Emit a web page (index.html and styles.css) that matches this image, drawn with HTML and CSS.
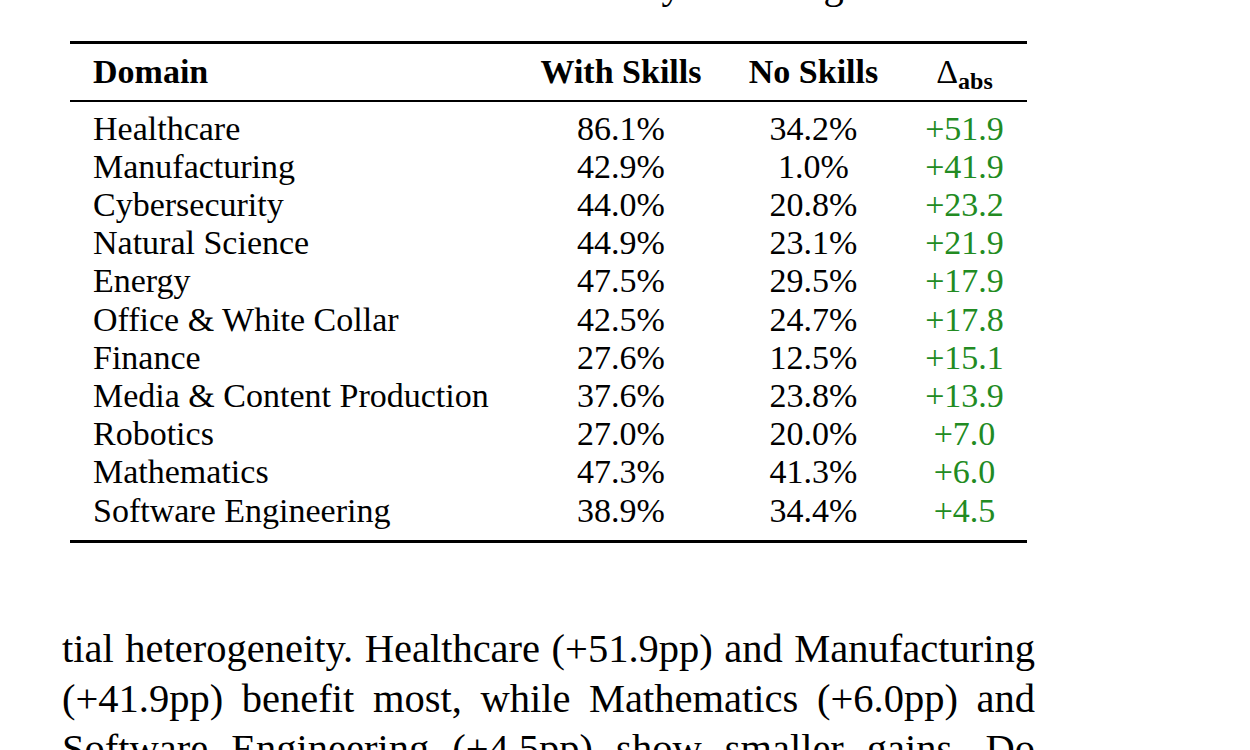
FILE: index.html
```html
<!DOCTYPE html>
<html lang="en">
<head>
<meta charset="utf-8">
<title>Domain results</title>
<link rel="stylesheet" href="styles.css">
</head>
<body>
<div class="page">
  <div class="caption"><span class="cap-label">Table 4:</span> Results sorted by domain gain.</div>
  <table class="results">
    <colgroup>
      <col class="c-domain">
      <col class="c-with">
      <col class="c-no">
      <col class="c-delta">
    </colgroup>
    <thead>
      <tr>
        <th class="left">Domain</th>
        <th>With Skills</th>
        <th>No Skills</th>
        <th><span class="delta">Δ</span><sub>abs</sub></th>
      </tr>
    </thead>
    <tbody>
      <tr class="first"><td class="left">Healthcare</td><td>86.1%</td><td>34.2%</td><td class="gain">+51.9</td></tr>
      <tr><td class="left">Manufacturing</td><td>42.9%</td><td>1.0%</td><td class="gain">+41.9</td></tr>
      <tr><td class="left">Cybersecurity</td><td>44.0%</td><td>20.8%</td><td class="gain">+23.2</td></tr>
      <tr><td class="left">Natural Science</td><td>44.9%</td><td>23.1%</td><td class="gain">+21.9</td></tr>
      <tr><td class="left">Energy</td><td>47.5%</td><td>29.5%</td><td class="gain">+17.9</td></tr>
      <tr><td class="left">Office &amp; White Collar</td><td>42.5%</td><td>24.7%</td><td class="gain">+17.8</td></tr>
      <tr><td class="left">Finance</td><td>27.6%</td><td>12.5%</td><td class="gain">+15.1</td></tr>
      <tr><td class="left">Media &amp; Content Production</td><td>37.6%</td><td>23.8%</td><td class="gain">+13.9</td></tr>
      <tr><td class="left">Robotics</td><td>27.0%</td><td>20.0%</td><td class="gain">+7.0</td></tr>
      <tr><td class="left">Mathematics</td><td>47.3%</td><td>41.3%</td><td class="gain">+6.0</td></tr>
      <tr class="last"><td class="left">Software Engineering</td><td>38.9%</td><td>34.4%</td><td class="gain">+4.5</td></tr>
    </tbody>
  </table>
  <div class="para">
    <div class="line">tial heterogeneity. Healthcare (+51.9pp) and Manufacturing</div>
    <div class="line">(+41.9pp) benefit most, while Mathematics (+6.0pp) and</div>
    <div class="line">Software Engineering (+4.5pp) show smaller gains. Do</div>
  </div>
</div>
</body>
</html>
```
FILE: styles.css
```css
html, body {
  margin: 0;
  padding: 0;
  background: #ffffff;
  overflow: hidden;
}

body {
  font-family: "Liberation Serif", "Times New Roman", serif;
  color: #000000;
}

.page {
  width: 973px;
  padding-left: 62px;
}

.caption {
  font-size: 40.5px;
  line-height: 50px;
  height: 50px;
  margin-top: -40px;
  text-align: center;
  padding-left: 60px;
  white-space: nowrap;
}

.cap-label {
  font-weight: bold;
}

.results {
  margin-top: 31px;
  margin-left: 8px;
  width: 957px;
  table-layout: fixed;
  border-collapse: collapse;
  font-size: 34px;
  line-height: 38.2px;
  border-top: 3px solid #000;
  border-bottom: 3px solid #000;
}

.c-domain { width: 447px; }
.c-with { width: 208px; }
.c-no { width: 177px; }
.c-delta { width: 125px; }

.results th,
.results td {
  padding: 0 23px;
  text-align: center;
  white-space: nowrap;
  font-weight: normal;
}

.results th {
  font-weight: bold;
  padding-top: 8.5px;
  padding-bottom: 9.5px;
  line-height: 38px;
}

.results thead tr {
  border-bottom: 2px solid #000;
}

.results .left {
  text-align: left;
}

.results tr.first td {
  padding-top: 7.5px;
}

.results tr.last td {
  padding-bottom: 10.5px;
}

.delta {
  font-weight: normal;
}

.results sub {
  font-size: 24px;
  font-weight: bold;
  line-height: 0;
  vertical-align: -6px;
}

.gain {
  color: #228b22;
}

.para {
  margin-top: 81px;
  font-size: 40.5px;
  line-height: 50px;
}

.line {
  text-align: justify;
  text-align-last: justify;
  white-space: nowrap;
}
```
